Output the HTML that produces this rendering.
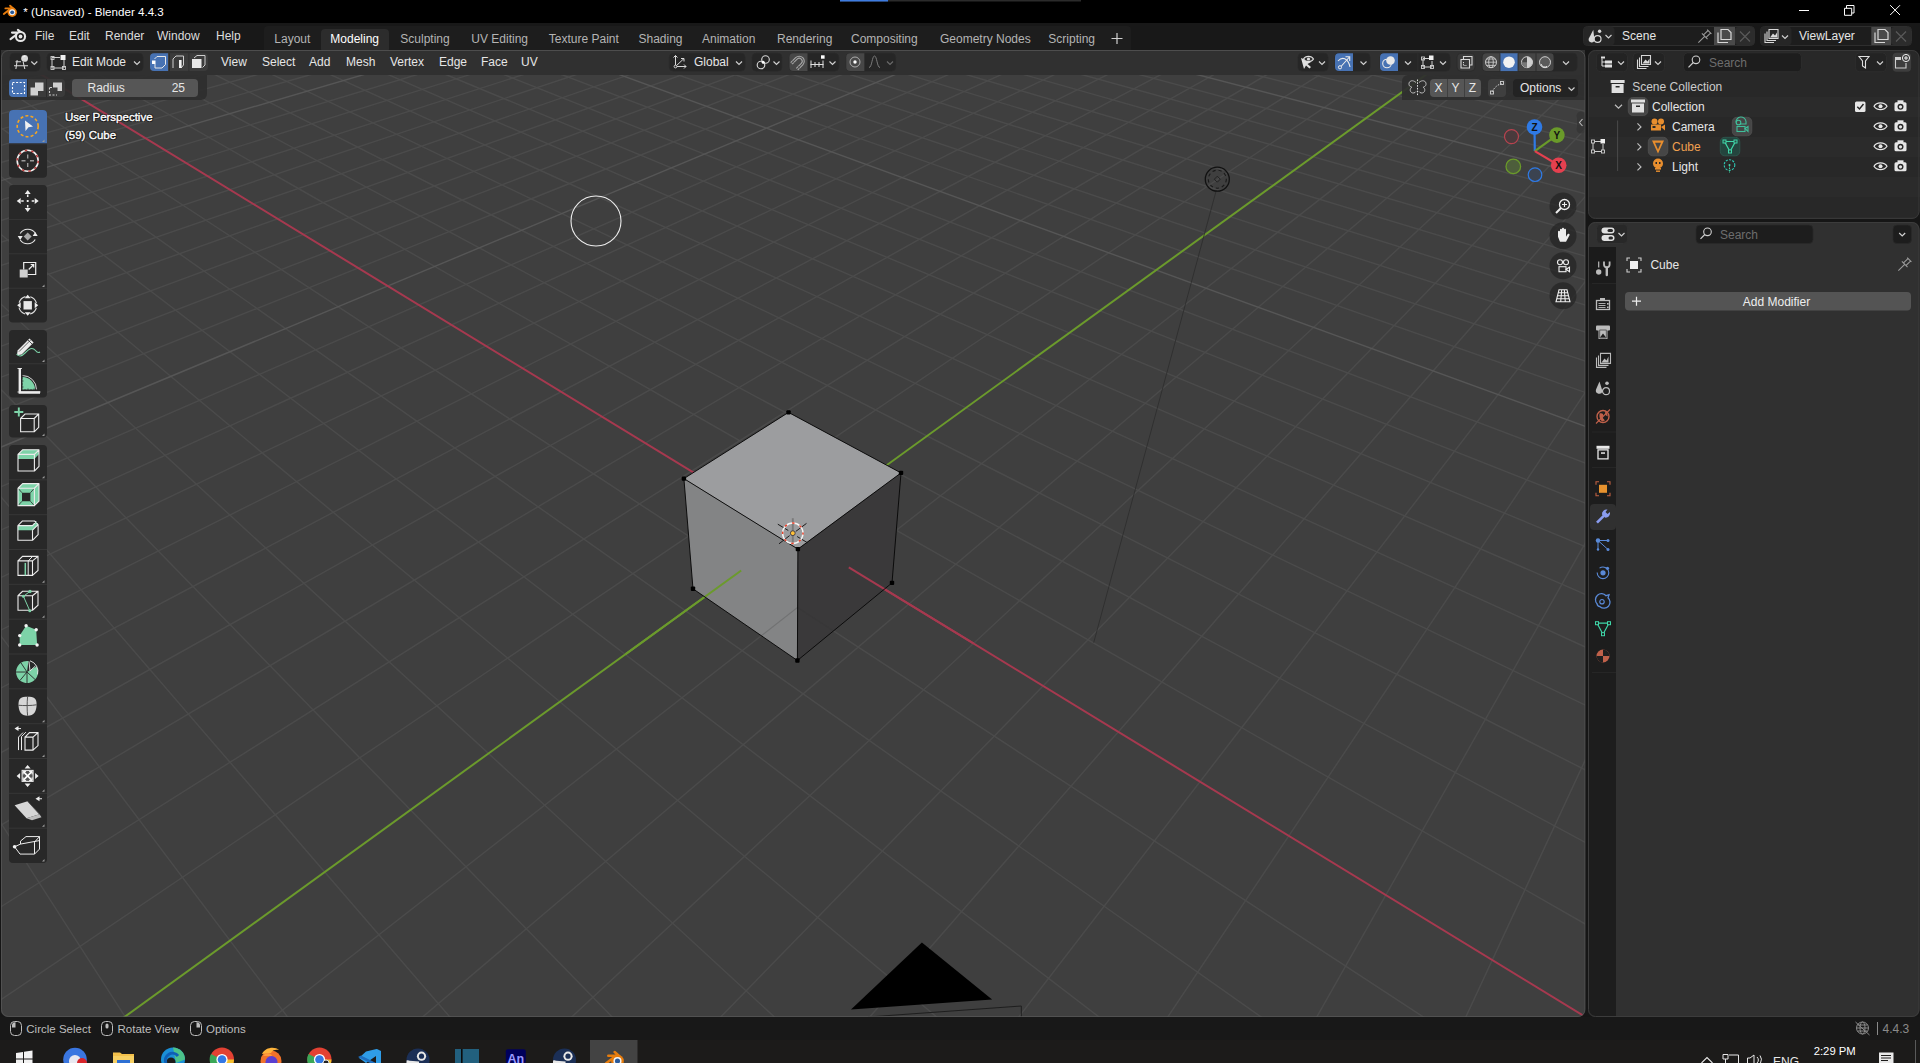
<!DOCTYPE html>
<html><head><meta charset="utf-8"><style>
body{margin:0;width:1920px;height:1063px;overflow:hidden;background:#161616}
svg{position:absolute;left:0;top:0;font-family:"Liberation Sans",sans-serif}
</style></head><body>
<svg width="1920" height="1063" viewBox="0 0 1920 1063">
<defs><clipPath id="vpc"><rect x="1" y="50" width="1584" height="967" rx="7"/></clipPath></defs>
<g clip-path="url(#vpc)">
<rect x="0" y="50" width="1586" height="968" fill="#3f3f3f"/>
<g stroke="#4b4b4b" stroke-width="1.4" fill="none"><path d="M-4614.4 685.4L744.5 -211.9"/><path d="M-4614.4 685.4L-13135150.8 3915475.6"/><path d="M-4768.6 731.3L757.2 -209.9"/><path d="M-4338.9 639.2L-12700414.3 3915632.5"/><path d="M-4935.8 781.2L770.1 -208.0"/><path d="M-4084.9 596.7L-12265677.7 3915789.3"/><path d="M-5117.8 835.4L783.3 -206.0"/><path d="M-3850.1 557.4L-11830941.2 3915946.2"/><path d="M-5316.6 894.7L796.6 -204.0"/><path d="M-3632.4 520.9L-11396204.7 3916103.0"/><path d="M-5774.9 1031.4L824.0 -199.9"/><path d="M-3241.1 455.4L-10526731.6 3916416.7"/><path d="M-6040.9 1110.7L838.0 -197.7"/><path d="M-3064.7 425.9L-10091995.1 3916573.6"/><path d="M-6337.1 1199.0L852.3 -195.6"/><path d="M-2899.5 398.2L-9657258.5 3916730.4"/><path d="M-6668.8 1297.9L866.8 -193.4"/><path d="M-2744.4 372.3L-9222522.0 3916887.3"/><path d="M-7043.0 1409.4L881.6 -191.1"/><path d="M-2598.6 347.9L-8787785.5 3917044.1"/><path d="M-7468.3 1536.2L896.6 -188.9"/><path d="M-2461.2 324.9L-8353048.9 3917201.0"/><path d="M-7955.9 1681.6L912.0 -186.5"/><path d="M-2331.6 303.2L-7918312.4 3917357.8"/><path d="M-8520.6 1850.0L927.6 -184.2"/><path d="M-2209.0 282.6L-7483575.9 3917514.7"/><path d="M-9182.2 2047.2L943.4 -181.8"/><path d="M-2093.0 263.2L-7048839.3 3917671.5"/><path d="M-10917.1 2564.5L976.1 -176.9"/><path d="M-1878.6 227.3L-6179366.3 3917985.2"/><path d="M-12085.5 2912.8L992.9 -174.3"/><path d="M-1779.3 210.7L-5744629.7 3918142.1"/><path d="M-13559.5 3352.3L1010.0 -171.7"/><path d="M-1684.8 194.9L-5309893.2 3918298.9"/><path d="M-15477.1 3924.0L1027.4 -169.1"/><path d="M-1594.7 179.8L-4875156.7 3918455.8"/><path d="M-18073.9 4698.2L1045.1 -166.4"/><path d="M-1508.8 165.4L-4440420.1 3918612.6"/><path d="M-21788.3 5805.7L1063.2 -163.7"/><path d="M-1426.7 151.7L-4005683.6 3918769.5"/><path d="M-27540.1 7520.5L1081.7 -160.9"/><path d="M-1348.3 138.5L-3570947.1 3918926.3"/><path d="M-37638.4 10531.3L1100.5 -158.0"/><path d="M-1273.2 126.0L-3136210.5 3919083.2"/><path d="M-60002.9 17199.1L1119.7 -155.1"/><path d="M-1201.3 113.9L-2701474.0 3919240.0"/><path d="M-12991167.2 3915527.6L1159.3 -149.1"/><path d="M-1066.1 91.3L-1832000.9 3919553.7"/><path d="M-12592190.1 3915671.5L1179.7 -146.1"/><path d="M-1002.6 80.6L-1397264.4 3919710.6"/><path d="M-12193213.0 3915815.5L1200.6 -142.9"/><path d="M-941.5 70.4L-962527.9 3919867.4"/><path d="M-11794236.0 3915959.4L1221.8 -139.7"/><path d="M-882.7 60.6L-527791.3 3920024.3"/><path d="M-11395258.9 3916103.4L1243.6 -136.4"/><path d="M-826.1 51.1L-93054.8 3920181.1"/><path d="M-10996281.8 3916247.3L1265.8 -133.1"/><path d="M-771.6 42.0L341681.7 3920338.0"/><path d="M-10597304.7 3916391.2L1288.4 -129.6"/><path d="M-719.1 33.2L776418.3 3920494.8"/><path d="M-10198327.7 3916535.2L1311.6 -126.1"/><path d="M-668.4 24.7L1211154.8 3920651.7"/><path d="M-9799350.6 3916679.1L1335.3 -122.5"/><path d="M-619.5 16.5L1645891.3 3920808.5"/><path d="M-9001396.5 3916967.0L1384.3 -115.1"/><path d="M-526.6 1.0L2515364.4 3921122.2"/><path d="M-8602419.4 3917111.0L1409.7 -111.3"/><path d="M-482.5 -6.4L2950100.9 3921279.1"/><path d="M-8203442.3 3917254.9L1435.6 -107.4"/><path d="M-439.8 -13.6L3384837.5 3921435.9"/><path d="M-7804465.2 3917398.9L1462.2 -103.4"/><path d="M-398.4 -20.5L3819574.0 3921592.8"/><path d="M-7405488.2 3917542.8L1489.4 -99.2"/><path d="M-358.4 -27.2L4254310.5 3921749.6"/><path d="M-7006511.1 3917686.8L1517.3 -95.0"/><path d="M-319.6 -33.7L4689047.1 3921906.5"/><path d="M-6607534.0 3917830.7L1545.8 -90.7"/><path d="M-281.9 -40.0L5123783.6 3922063.3"/><path d="M-6208557.0 3917974.7L1575.0 -86.3"/><path d="M-245.5 -46.1L5558520.1 3922220.2"/><path d="M-5809579.9 3918118.6L1605.0 -81.8"/><path d="M-210.0 -52.0L5993256.7 3922377.0"/><path d="M-5011625.7 3918406.5L1667.3 -72.3"/><path d="M-142.3 -63.4L6862729.7 3922690.7"/><path d="M-4612648.7 3918550.5L1699.6 -67.5"/><path d="M-109.8 -68.8L7297466.3 3922847.6"/><path d="M-4213671.6 3918694.4L1732.8 -62.4"/><path d="M-78.3 -74.1L7732202.8 3923004.4"/><path d="M-3814694.5 3918838.4L1766.9 -57.3"/><path d="M-47.6 -79.2L8166939.3 3923161.3"/><path d="M-3415717.5 3918982.3L1801.9 -52.0"/><path d="M-17.8 -84.2L8601675.9 3923318.1"/><path d="M-3016740.4 3919126.3L1837.9 -46.5"/><path d="M11.2 -89.1L9036412.4 3923475.0"/><path d="M-2617763.3 3919270.2L1874.9 -41.0"/><path d="M39.5 -93.8L9471148.9 3923631.8"/><path d="M-2218786.3 3919414.2L1912.9 -35.2"/><path d="M67.0 -98.4L9905885.5 3923788.7"/><path d="M-1819809.2 3919558.1L1952.1 -29.3"/><path d="M93.8 -102.9L10340622.0 3923945.5"/><path d="M-1021855.0 3919846.0L2033.8 -16.9"/><path d="M145.4 -111.6L11210095.1 3924259.2"/><path d="M-622878.0 3919990.0L2076.5 -10.5"/><path d="M170.3 -115.7L11644831.6 3924416.1"/><path d="M-223900.9 3920133.9L2120.5 -3.8"/><path d="M194.5 -119.8L12079568.1 3924572.9"/><path d="M175076.2 3920277.9L2165.8 3.0"/><path d="M218.1 -123.7L12514304.7 3924729.8"/><path d="M574053.2 3920421.8L2212.6 10.1"/><path d="M241.2 -127.6L93001.6 27989.7"/><path d="M973030.3 3920565.8L2260.8 17.4"/><path d="M263.7 -131.4L46167.9 13331.6"/><path d="M1372007.4 3920709.7L2310.7 24.9"/><path d="M285.7 -135.1L31194.3 8645.1"/><path d="M1770984.5 3920853.7L2362.2 32.7"/><path d="M307.2 -138.7L23821.5 6337.6"/><path d="M2169961.5 3920997.6L2415.4 40.8"/><path d="M328.2 -142.2L19433.7 4964.3"/><path d="M2967915.7 3921285.5L2527.3 57.7"/><path d="M368.9 -149.0L14451.6 3405.0"/><path d="M3366892.7 3921429.5L2586.2 66.6"/><path d="M388.5 -152.3L12901.8 2919.9"/><path d="M3765869.8 3921573.4L2647.2 75.8"/><path d="M407.7 -155.5L11698.7 2543.3"/><path d="M4164846.9 3921717.4L2710.5 85.4"/><path d="M426.5 -158.6L10737.6 2242.5"/><path d="M4563823.9 3921861.3L2776.1 95.3"/><path d="M444.8 -161.7L9952.3 1996.7"/><path d="M4962801.0 3922005.3L2844.2 105.6"/><path d="M462.8 -164.7L9298.5 1792.1"/><path d="M5361778.1 3922149.2L2915.0 116.3"/><path d="M480.5 -167.7L8745.8 1619.1"/><path d="M5760755.2 3922293.2L2988.5 127.4"/><path d="M497.7 -170.5L8272.3 1470.9"/><path d="M6159732.2 3922437.1L3065.0 139.0"/><path d="M514.6 -173.4L7862.2 1342.6"/><path d="M6957686.4 3922725.0L3227.6 163.6"/><path d="M547.4 -178.9L7187.4 1131.4"/><path d="M7356663.4 3922868.9L3314.2 176.7"/><path d="M563.3 -181.5L6906.3 1043.4"/><path d="M7755640.5 3923012.9L3404.5 190.3"/><path d="M578.9 -184.1L6655.0 964.7"/><path d="M8154617.6 3923156.8L3498.8 204.6"/><path d="M594.2 -186.7L6428.9 894.0"/><path d="M8553594.7 3923300.8L3597.5 219.5"/><path d="M609.2 -189.2L6224.3 829.9"/><path d="M8952571.7 3923444.7L3700.8 235.1"/><path d="M623.9 -191.7L6038.5 771.8"/><path d="M9351548.8 3923588.7L3809.1 251.5"/><path d="M638.3 -194.1L5868.8 718.7"/><path d="M9750525.9 3923732.6L3922.6 268.7"/><path d="M652.4 -196.5L5713.3 670.0"/><path d="M10149502.9 3923876.6L4041.9 286.7"/><path d="M666.3 -198.8L5570.2 625.2"/><path d="M10947457.1 3924164.5L4299.4 325.6"/><path d="M693.3 -203.3L5316.0 545.7"/><path d="M11346434.1 3924308.4L4438.7 346.7"/><path d="M706.5 -205.5L5202.6 510.1"/><path d="M11745411.2 3924452.4L4585.8 368.9"/><path d="M719.4 -207.7L5096.9 477.1"/><path d="M12144388.3 3924596.3L4741.4 392.5"/><path d="M732.1 -209.8L4998.4 446.2"/><path d="M12543365.4 3924740.3L4906.2 417.4"/><path d="M744.5 -211.9L4906.2 417.4"/></g>
<g stroke="#565656" stroke-width="1.4" fill="none"><path d="M-5534.6 959.7L810.2 -201.9"/><path d="M-3429.9 487.0L-10961468.1 3916259.9"/><path d="M-9968.2 2281.6L959.6 -179.3"/><path d="M-1983.0 244.8L-6614102.8 3917828.4"/><path d="M-151549.7 44493.2L1139.3 -152.2"/><path d="M-1132.3 102.4L-2266737.5 3919396.9"/><path d="M-9400373.5 3916823.1L1359.6 -118.9"/><path d="M-572.3 8.6L2080627.9 3920965.4"/><path d="M-1420832.1 3919702.1L1992.3 -23.2"/><path d="M119.9 -107.3L10775358.5 3924102.4"/><path d="M2568938.6 3921141.6L2470.4 49.1"/><path d="M348.8 -145.6L16523.3 4053.4"/><path d="M6558709.3 3922581.0L3144.7 151.0"/><path d="M531.2 -176.1L7503.6 1230.3"/><path d="M10548480.0 3924020.5L4167.3 305.7"/><path d="M679.9 -201.1L5438.2 583.9"/></g>
<path d="M-175.7 -57.8L740.4 501.2M848.8 567.4L6427993.2 3922533.9" stroke="#a6394f" stroke-width="2" fill="none"/>
<path d="M-5410602.8 3918262.6L741.2 570.5M840.7 498.5L1635.7 -77.1" stroke="#6b9a2c" stroke-width="2" fill="none"/>
<path d="M1216.3 190.2L1093.7 642.7" stroke="#2c2c2c" stroke-width="0.8" fill="none"/>
<circle cx="1217.3" cy="179.2" r="12" fill="none" stroke="#111" stroke-width="1.3"/>
<circle cx="1217.3" cy="179.2" r="9" fill="none" stroke="#1a1a1a" stroke-width="1.1" stroke-dasharray="3.2 3"/>
<path d="M1217.3 176.2l3 3l-3 3l-3 -3z" fill="none" stroke="#222" stroke-width="1"/>
<polygon points="788.5,412.4 901.0,472.9 797.9,549.1 683.9,478.6" fill="#9c9d9f"/>
<polygon points="683.9,478.6 797.9,549.1 797.4,660.5 693.0,588.8" fill="#838485"/>
<polygon points="797.9,549.1 901.0,472.9 892.0,582.9 797.4,660.5" fill="#3a393a"/>
<clipPath id="facec"><polygon points="683.9,478.6 797.9,549.1 797.4,660.5 693.0,588.8"/><polygon points="797.9,549.1 901.0,472.9 892.0,582.9 797.4,660.5"/></clipPath>
<path d="M507.7 658.1L688.6 536.1M616.4 749.1L797.6 607.4M583.9 539.0L803.2 693.8M797.6 607.4L994.3 736.1M896.3 530.3L1088.0 639.8M803.2 693.8L999.2 527.4" stroke="#333" stroke-width="1.2" fill="none" opacity="0.22" clip-path="url(#facec)"/>
<path d="M625.3 654.4L741.2 570.5" stroke="#6b9a2c" stroke-width="2" fill="none"/>
<path d="M848.8 567.4L973.5 643.4" stroke="#a6394f" stroke-width="2" fill="none"/>
<path d="M788.5 412.4L901.0 472.9M901.0 472.9L797.9 549.1M797.9 549.1L683.9 478.6M683.9 478.6L788.5 412.4M683.9 478.6L693.0 588.8M797.9 549.1L797.4 660.5M901.0 472.9L892.0 582.9M693.0 588.8L797.4 660.5M797.4 660.5L892.0 582.9" stroke="#080808" stroke-width="0.95" fill="none"/>
<rect x="786.3" y="410.2" width="4.4" height="4.4" rx="1" fill="#000"/>
<rect x="898.8" y="470.7" width="4.4" height="4.4" rx="1" fill="#000"/>
<rect x="795.7" y="546.9" width="4.4" height="4.4" rx="1" fill="#000"/>
<rect x="681.7" y="476.4" width="4.4" height="4.4" rx="1" fill="#000"/>
<rect x="690.8" y="586.6" width="4.4" height="4.4" rx="1" fill="#000"/>
<rect x="795.2" y="658.3" width="4.4" height="4.4" rx="1" fill="#000"/>
<rect x="889.8" y="580.7" width="4.4" height="4.4" rx="1" fill="#000"/>
<g transform="translate(792.8,533.2)"><path d="M0 -15V10" stroke="#7a7a7a" stroke-width="1.9"/><path d="M-15 -9L-4.5 -2.7M4.3 3.3L14.6 9.5M13.7 -9.8L3 -1.8M-3.2 2.4L-13.8 10.6" stroke="#1a1a1a" stroke-width="1"/><circle r="10.2" fill="none" stroke="#f4f4f4" stroke-width="1.5"/><circle r="10.2" fill="none" stroke="#e8402a" stroke-width="1.5" stroke-dasharray="2.5 5.5" stroke-dashoffset="1"/><circle r="2.4" fill="#ffc23a" stroke="#2a2a40" stroke-width="0.8"/></g>
<polygon points="921.9,942.5 851,1009.5 992.1,999.5" fill="#000"/>
<path d="M868 1017L1021.3 1006V1017" stroke="#1e1e1e" stroke-width="1" fill="none"/>
<circle cx="596" cy="221" r="25" fill="none" stroke="#fff" stroke-width="1.1" opacity="0.9"/>
</g>
<rect x="0" y="0" width="1920" height="23" fill="#000"/>
<rect x="840" y="0" width="241" height="1.5" fill="#2b2b2b"/>
<rect x="840" y="0" width="48" height="1.5" fill="#3d7be0"/>
<g transform="translate(12.2,12.3) scale(1.0)"><g stroke="#e87d0d" stroke-linecap="round" stroke-width="1.9" fill="none"><path d="M-6.8 -3.9H-1.3M-2.1 -6.6L1.4 -3.6M-8.4 1.7L-3.3 -2.3"/></g><circle r="4.7" fill="#e87d0d"/><circle r="3" fill="#f4f4f4"/><circle r="1.9" fill="#2a5a9a"/></g>
<text x="23.3" y="16" font-size="11.6" fill="#ffffff">* (Unsaved) - Blender 4.4.3</text>
<path d="M1799 10.5H1809" fill="none" stroke="#fff" stroke-width="1"/>
<path d="M1844.5 8.3H1851.7V15.3H1844.5Z M1846.5 8.3V5.5H1854V13H1851.7" fill="none" stroke="#fff" stroke-width="1"/>
<path d="M1890.2 5.2L1900 15M1900 5.2L1890.2 15" fill="none" stroke="#fff" stroke-width="1"/>
<rect x="0" y="23" width="1920" height="27" fill="#181818"/>
<g transform="translate(20.5,36.5)"><g stroke="#e6e6e6" stroke-linecap="round" stroke-width="2.1" fill="none"><path d="M-8.5 -3.9H-2M-2.6 -6.6L1.8 -3.4M-10 2.7L-4 -1.8"/></g><circle r="5.6" fill="#e6e6e6"/><circle r="3.5" fill="#181818"/><circle r="1.9" fill="#e6e6e6"/></g>
<text x="35" y="40.3" font-size="12" fill="#dcdcdc">File</text>
<text x="69" y="40.3" font-size="12" fill="#dcdcdc">Edit</text>
<text x="105" y="40.3" font-size="12" fill="#dcdcdc">Render</text>
<text x="157" y="40.3" font-size="12" fill="#dcdcdc">Window</text>
<text x="216" y="40.3" font-size="12" fill="#dcdcdc">Help</text>
<rect x="264" y="26" width="867" height="24" fill="#1d1d1d" rx="4"/>
<rect x="264" y="40" width="867" height="10" fill="#1d1d1d"/>
<rect x="321" y="29" width="68" height="24" fill="#2c2c2c" rx="4"/>
<text x="274.3" y="43.2" font-size="12" fill="#b4b4b4">Layout</text>
<text x="330.3" y="43.2" font-size="12" fill="#ffffff">Modeling</text>
<text x="400.3" y="43.2" font-size="12" fill="#b4b4b4">Sculpting</text>
<text x="471.3" y="43.2" font-size="12" fill="#b4b4b4">UV Editing</text>
<text x="548.8" y="43.2" font-size="12" fill="#b4b4b4">Texture Paint</text>
<text x="638.5" y="43.2" font-size="12" fill="#b4b4b4">Shading</text>
<text x="702" y="43.2" font-size="12" fill="#b4b4b4">Animation</text>
<text x="777" y="43.2" font-size="12" fill="#b4b4b4">Rendering</text>
<text x="851" y="43.2" font-size="12" fill="#b4b4b4">Compositing</text>
<text x="940" y="43.2" font-size="12" fill="#b4b4b4">Geometry Nodes</text>
<text x="1048.3" y="43.2" font-size="12" fill="#b4b4b4">Scripting</text>
<path d="M1111.5 38.5H1122.5M1117 33V44" fill="none" stroke="#cfcfcf" stroke-width="1.2"/>
<rect x="1583.5" y="26.5" width="171" height="19" fill="#1d1d1d" rx="4" stroke="#2e2e2e" stroke-width="1"/>
<rect x="1583.5" y="26.5" width="31" height="19" fill="#262626" rx="4"/>
<rect x="1714" y="27" width="21" height="18" fill="#4a4a4a"/>
<rect x="1735" y="27" width="19.5" height="18" fill="#2c2c2c" rx="3"/>
<text x="1622.1" y="40.4" font-size="12" fill="#e6e6e6">Scene</text>
<path d="M1593.3 29.8L1588.7 38.8A3.1 3.1 0 0 0 1594.5 40.8Z" fill="#d8d8d8"/>
<circle cx="1599.6" cy="31.2" r="1.7" fill="#d8d8d8"/><circle cx="1597.6" cy="39" r="3.4" fill="#1d1d1d" stroke="#d8d8d8" stroke-width="1.2"/>
<path d="M1605.5 35.0L1608.5 38.0L1611.5 35.0" fill="none" stroke="#cfcfcf" stroke-width="1.2"/>
<g transform="translate(1704,37) rotate(45)" stroke="#9a9a9a" stroke-width="1.1" fill="none"><path d="M-1.8 -7V-1.5M1.8 -7V-1.5M-3 -7.5H3M-4 -1H4M0 -1V8"/></g>
<path d="M1718 32.5V42.5H1728M1721 29.5H1728L1731 32.5V39.5H1721Z" fill="none" stroke="#d8d8d8" stroke-width="1.2"/>
<path d="M1740 31.5L1750 41.5M1750 31.5L1740 41.5" fill="none" stroke="#5a5a5a" stroke-width="1.2"/>
<rect x="1760.5" y="26.5" width="151" height="19" fill="#1d1d1d" rx="4" stroke="#2e2e2e" stroke-width="1"/>
<rect x="1760.5" y="26.5" width="31" height="19" fill="#262626" rx="4"/>
<rect x="1871.3" y="27" width="19.7" height="18" fill="#4a4a4a"/>
<rect x="1891" y="27" width="20" height="18" fill="#2c2c2c" rx="3"/>
<text x="1799" y="40.4" font-size="12" fill="#e6e6e6">ViewLayer</text>
<path d="M1765 33.5V42.5H1774 M1767 31.5V40.5H1776 M1769 29.5H1778V38.5H1769Z" fill="none" stroke="#d8d8d8" stroke-width="1.1"/>
<path d="M1770 37.5L1773 33.5L1775 35.5L1777 32.5V37.5Z" fill="#d8d8d8"/>
<path d="M1782 35.5L1785 38.5L1788 35.5" fill="none" stroke="#cfcfcf" stroke-width="1.2"/>
<path d="M1875 32.5V42.5H1885M1878 29.5H1885L1888 32.5V39.5H1878Z" fill="none" stroke="#d8d8d8" stroke-width="1.2"/>
<path d="M1896 31.5L1906 41.5M1906 31.5L1896 41.5" fill="none" stroke="#5a5a5a" stroke-width="1.2"/>
<rect x="1" y="50" width="1584" height="25" fill="#303030"/>
<rect x="10" y="53.3" width="30" height="17.8" fill="#262626" rx="4" stroke="#2a2a2a" stroke-width="0.8"/>
<path d="M14 65.8H28M15.5 61.8H21M17.2 60.2L15.9 69M23.2 62L24.8 69" fill="none" stroke="#d8d8d8" stroke-width="1.1"/>
<circle cx="24.6" cy="58.4" r="3.4" fill="#d8d8d8"/><path d="M23 57.5A2 2 0 0 1 25.5 56.2" stroke="#fff" stroke-width="0.8" fill="none"/>
<path d="M31.299999999999997 61.5L34.3 64.5L37.3 61.5" fill="none" stroke="#cfcfcf" stroke-width="1.2"/>
<rect x="47" y="53.3" width="96" height="17.8" fill="#262626" rx="4" stroke="#2a2a2a" stroke-width="0.8"/>
<path d="M52 57.5H60M52 57.5V68M52 68H64M64 68V60M52 57.5" fill="none" stroke="#cfcfcf" stroke-width="1"/>
<rect x="51" y="56.5" width="3" height="3" fill="none" stroke="#cfcfcf" stroke-width="0.9"/><rect x="51" y="66.5" width="3" height="3" fill="none" stroke="#cfcfcf" stroke-width="0.9"/><rect x="62.5" y="66.5" width="3" height="3" fill="none" stroke="#cfcfcf" stroke-width="0.9"/><rect x="60.5" y="55" width="5" height="5" fill="#f0f0f0"/>
<text x="72" y="65.9" font-size="12" fill="#e6e6e6">Edit Mode</text>
<path d="M134 61.5L137 64.5L140 61.5" fill="none" stroke="#cfcfcf" stroke-width="1.2"/>
<rect x="150" y="53.3" width="58" height="17.8" fill="#3b3b3b" rx="4"/>
<path d="M154 53.3H168V71.1H154A4 4 0 0 1 150 67.1V57.3A4 4 0 0 1 154 53.3Z" fill="#4772b3"/>
<rect x="169" y="53.3" width="0.8" height="17.8" fill="#2a2a2a"/>
<rect x="188.5" y="53.3" width="0.8" height="17.8" fill="#2a2a2a"/>
<path d="M155 64V68H162L165.5 64.5V56.5H157L154.5 59" fill="none" stroke="#e8e8e8" stroke-width="1"/>
<rect x="152" y="60.5" width="3.5" height="3.5" fill="#fff"/>
<path d="M173 68V59L176 56H183.5V65L181 68" fill="none" stroke="#cfcfcf" stroke-width="1"/>
<rect x="179" y="60" width="2.6" height="8" fill="#f0f0f0"/>
<path d="M194 58L197 55.5H205V65L202.5 67.5" fill="none" stroke="#cfcfcf" stroke-width="1"/>
<rect x="192" y="59" width="9.5" height="9" fill="#e8e8e8"/>
<text x="221" y="65.9" font-size="12" fill="#e6e6e6">View</text>
<text x="262" y="65.9" font-size="12" fill="#e6e6e6">Select</text>
<text x="309" y="65.9" font-size="12" fill="#e6e6e6">Add</text>
<text x="346" y="65.9" font-size="12" fill="#e6e6e6">Mesh</text>
<text x="390" y="65.9" font-size="12" fill="#e6e6e6">Vertex</text>
<text x="439" y="65.9" font-size="12" fill="#e6e6e6">Edge</text>
<text x="481" y="65.9" font-size="12" fill="#e6e6e6">Face</text>
<text x="521" y="65.9" font-size="12" fill="#e6e6e6">UV</text>
<rect x="669.4" y="53.3" width="75.6" height="17.8" fill="#262626" rx="4" stroke="#2a2a2a" stroke-width="0.8"/>
<path d="M675.5 55.5V66.5H686M675.5 66.5L684 58.5M673.5 57.5L675.5 55.5L677.5 57.5M684 64.5L686 66.5L684 68.5M681 58.5H684V61.5" fill="none" stroke="#d8d8d8" stroke-width="1"/>
<circle cx="675.5" cy="66.5" r="1.4" fill="#303030" stroke="#d8d8d8" stroke-width="0.9"/>
<text x="694" y="65.9" font-size="12" fill="#e6e6e6">Global</text>
<path d="M736 61.5L739 64.5L742 61.5" fill="none" stroke="#cfcfcf" stroke-width="1.2"/>
<rect x="752.2" y="53.3" width="29.7" height="17.8" fill="#262626" rx="4" stroke="#2a2a2a" stroke-width="0.8"/>
<circle cx="761" cy="65" r="3.8" fill="none" stroke="#d8d8d8" stroke-width="1.1"/><circle cx="765.5" cy="59.5" r="3.8" fill="none" stroke="#d8d8d8" stroke-width="1.1"/><circle cx="763.2" cy="62.2" r="1.5" fill="#fff"/>
<path d="M773.5 61.5L776.5 64.5L779.5 61.5" fill="none" stroke="#cfcfcf" stroke-width="1.2"/>
<rect x="789.4" y="53.3" width="49.3" height="17.8" fill="#262626" rx="4" stroke="#2a2a2a" stroke-width="0.8"/>
<path d="M793.4 53.3H807.5V71.1H793.4A4 4 0 0 1 789.4 67.1V57.3A4 4 0 0 1 793.4 53.3Z" fill="#474747"/>
<g transform="translate(798.5,62) rotate(45)"><path d="M-4 6V-1A4 4 0 0 1 4 -1V6" stroke="#a8a8a8" stroke-width="3.2" fill="none"/><path d="M-4 6V-1A4 4 0 0 1 4 -1V6" stroke="#474747" stroke-width="1" fill="none"/><path d="M-5.6 3.5H-2.4M2.4 3.5H5.6" stroke="#474747" stroke-width="0.8"/></g>
<path d="M810.5 64.5H823.5M811 60.5V68M815 62V67M819 62V67M823 60.5V68" fill="none" stroke="#e0e0e0" stroke-width="1"/>
<rect x="821" y="55.3" width="3.6" height="3.4" fill="#fff"/>
<path d="M829.5 61.5L832.5 64.5L835.5 61.5" fill="none" stroke="#cfcfcf" stroke-width="1.2"/>
<rect x="846.2" y="53.3" width="49.4" height="17.8" fill="#262626" rx="4" stroke="#2a2a2a" stroke-width="0.8"/>
<path d="M850.2 53.3H864.4V71.1H850.2A4 4 0 0 1 846.2 67.1V57.3A4 4 0 0 1 850.2 53.3Z" fill="#474747"/>
<circle cx="855" cy="62" r="5" fill="none" stroke="#b8b8b8" stroke-width="0.9"/><circle cx="855" cy="62" r="1.7" fill="#fff"/>
<path d="M869 67.5C872 67.5 872 56 874.5 56C877 56 877 67.5 880 67.5" fill="none" stroke="#7a7a7a" stroke-width="1"/>
<path d="M887 61.5L890 64.5L893 61.5" fill="none" stroke="#6a6a6a" stroke-width="1.2"/>
<rect x="1298" y="53.3" width="30" height="17.8" fill="#262626" rx="4" stroke="#2a2a2a" stroke-width="0.8"/>
<path d="M1301 58L1304 69L1306 65.5L1309.5 68.5L1311 67L1307.5 64L1311 62Z" fill="#e0e0e0"/>
<path d="M1303.5 59C1305.5 55.5 1311.5 55.5 1313.5 59C1311.5 62.5 1305.5 62.5 1303.5 59Z" fill="#303030" stroke="#e0e0e0" stroke-width="1.1"/><circle cx="1308.5" cy="59" r="1.6" fill="#e0e0e0"/>
<path d="M1319 61.5L1322 64.5L1325 61.5" fill="none" stroke="#cfcfcf" stroke-width="1.2"/>
<rect x="1335" y="53.3" width="35" height="17.8" fill="#262626" rx="4" stroke="#2a2a2a" stroke-width="0.8"/>
<path d="M1339 53.3H1353V71.1H1339A4 4 0 0 1 1335 67.1V57.3A4 4 0 0 1 1339 53.3Z" fill="#4772b3"/>
<path d="M1338 61C1342 56.5 1348 57.5 1350 67" fill="none" stroke="#ececec" stroke-width="1.1"/>
<path d="M1341 66.5L1349 57.5M1345.5 56.8H1349.7V61" fill="none" stroke="#ececec" stroke-width="1.1"/>
<circle cx="1340" cy="67.3" r="1.6" fill="#4772b3" stroke="#ececec" stroke-width="1"/>
<path d="M1360.5 61.5L1363.5 64.5L1366.5 61.5" fill="none" stroke="#cfcfcf" stroke-width="1.2"/>
<rect x="1380" y="53.3" width="70" height="17.8" fill="#262626" rx="4" stroke="#2a2a2a" stroke-width="0.8"/>
<path d="M1384 53.3H1398V71.1H1384A4 4 0 0 1 1380 67.1V57.3A4 4 0 0 1 1384 53.3Z" fill="#4772b3"/>
<circle cx="1387" cy="63.5" r="4.3" fill="none" stroke="#e8e8e8" stroke-width="1.1"/><circle cx="1390.5" cy="60.5" r="4.3" fill="#e8e8e8"/>
<path d="M1405 61.5L1408 64.5L1411 61.5" fill="none" stroke="#cfcfcf" stroke-width="1.2"/>
<rect x="1417.5" y="53.3" width="0.8" height="17.8" fill="#2f2f2f"/>
<path d="M1423 58.5H1430M1423 58.5V67M1423 67H1432M1432 67V61" fill="none" stroke="#cfcfcf" stroke-width="1"/>
<rect x="1421.5" y="57" width="3" height="3" fill="none" stroke="#cfcfcf" stroke-width="0.9"/><rect x="1421.5" y="65.5" width="3" height="3" fill="none" stroke="#cfcfcf" stroke-width="0.9"/><rect x="1430.5" y="65.5" width="3" height="3" fill="none" stroke="#cfcfcf" stroke-width="0.9"/><rect x="1429" y="55.5" width="4.5" height="4.5" fill="#f0f0f0"/>
<path d="M1440 61.5L1443 64.5L1446 61.5" fill="none" stroke="#cfcfcf" stroke-width="1.2"/>
<rect x="1457" y="53.3" width="18" height="17.8" fill="#3a3a3a" rx="4" stroke="#2a2a2a" stroke-width="0.8"/>
<path d="M1461 59.5H1469.5V68H1461Z M1463.5 59.5V56.5H1472V65H1469.5" fill="none" stroke="#d8d8d8" stroke-width="1.1"/><path d="M1463.5 62V65.5H1467" stroke="#d8d8d8" stroke-width="1" fill="none" stroke-dasharray="1.2 1"/>
<rect x="1482" y="53.3" width="95" height="17.8" fill="#262626" rx="4" stroke="#2a2a2a" stroke-width="0.8"/>
<rect x="1482.5" y="53.3" width="71.5" height="17.8" fill="#454545" rx="4"/>
<rect x="1500" y="53.3" width="18" height="17.8" fill="#4772b3"/>
<rect x="1499.6" y="53.3" width="0.8" height="17.8" fill="#2a2a2a"/>
<rect x="1517.6" y="53.3" width="0.8" height="17.8" fill="#2a2a2a"/>
<rect x="1535.6" y="53.3" width="0.8" height="17.8" fill="#2a2a2a"/>
<rect x="1553.6" y="53.3" width="0.8" height="17.8" fill="#2a2a2a"/>
<circle cx="1491" cy="62.2" r="5.5" fill="none" stroke="#cfcfcf" stroke-width="1"/><ellipse cx="1491" cy="62.2" rx="2.3" ry="5.5" fill="none" stroke="#cfcfcf" stroke-width="0.9"/><path d="M1485.5 62.2H1496.5M1486.5 59H1495.5M1486.5 65.4H1495.5" stroke="#cfcfcf" stroke-width="0.8"/>
<circle cx="1509" cy="62.2" r="5.8" fill="#f2f2f2"/>
<circle cx="1527" cy="62.2" r="5.5" fill="none" stroke="#cfcfcf" stroke-width="1"/><path d="M1527 56.7A5.5 5.5 0 0 1 1527 67.7Z" fill="#cfcfcf"/><path d="M1527 62.2L1521.5 62.2A5.5 5.5 0 0 0 1527 67.7Z" fill="#777"/>
<circle cx="1545" cy="62.2" r="5.5" fill="#5a5a5a" stroke="#cfcfcf" stroke-width="1"/><path d="M1541 64A4 4 0 0 0 1547 66.5" stroke="#eee" stroke-width="1" fill="none"/>
<path d="M1563 61.5L1566 64.5L1569 61.5" fill="none" stroke="#cfcfcf" stroke-width="1.2"/>
<path d="M1 75H207V94A6 6 0 0 1 201 100H1Z" fill="#2e2e2e" fill-opacity="0.93"/>
<rect x="9" y="79" width="56" height="18" fill="#3b3b3b" rx="4"/>
<path d="M13 79H27V97H13A4 4 0 0 1 9 93V83A4 4 0 0 1 13 79Z" fill="#4772b3"/>
<rect x="27" y="79" width="0.8" height="18" fill="#2a2a2a"/>
<rect x="46" y="79" width="0.8" height="18" fill="#2a2a2a"/>
<rect x="12.5" y="82.5" width="12" height="11" fill="none" stroke="#fff" stroke-width="1.1" stroke-dasharray="2 1.6"/>
<path d="M30.5 87.5H35V82.5H43.5V91H38V95.5H30.5Z" fill="#d0d0d0"/>
<path d="M49.5 87.5V95H57M52 87.5H49.5" fill="none" stroke="#d0d0d0" stroke-width="1.1" stroke-dasharray="2 1.5"/>
<path d="M53 82.5H62V91H53Z" fill="#d0d0d0"/>
<path d="M53 87.5H57.5V91H53Z" fill="#3b3b3b"/>
<rect x="72" y="79" width="126" height="18" fill="#565656" rx="4"/>
<text x="87.5" y="92.2" font-size="12" fill="#e6e6e6">Radius</text>
<text x="185" y="92.2" font-size="12" fill="#e6e6e6" text-anchor="end">25</text>
<path d="M1408 75H1585V100H1402V81A6 6 0 0 1 1408 75Z" fill="#2e2e2e" fill-opacity="0.93"/>
<path d="M1416 82.5C1413 79.5 1408.5 80.5 1409 84.5C1409.3 86.5 1411 87 1412 87.3C1410 88 1409.5 91 1411.5 92.5C1413 93.5 1415 93 1416 91.5 M1419 82.5C1422 79.5 1426.5 80.5 1426 84.5C1425.7 86.5 1424 87 1423 87.3C1425 88 1425.5 91 1423.5 92.5C1422 93.5 1420 93 1419 91.5" fill="none" stroke="#bdbdbd" stroke-width="1"/>
<path d="M1417.5 79.5V95.5" fill="none" stroke="#e0e0e0" stroke-width="1" stroke-dasharray="1.6 1.2"/>
<rect x="1430" y="79" width="51" height="18" fill="#565656" rx="4"/>
<rect x="1447" y="79" width="0.8" height="18" fill="#3a3a3a"/>
<rect x="1464" y="79" width="0.8" height="18" fill="#3a3a3a"/>
<text x="1438.5" y="92.2" font-size="12" fill="#e6e6e6" text-anchor="middle">X</text>
<text x="1455.5" y="92.2" font-size="12" fill="#e6e6e6" text-anchor="middle">Y</text>
<text x="1472.5" y="92.2" font-size="12" fill="#e6e6e6" text-anchor="middle">Z</text>
<rect x="1488" y="79" width="18" height="18" fill="#3f3f3f" rx="4"/>
<path d="M1492 92C1494 88 1497 85 1501.5 83.5" fill="none" stroke="#d0d0d0" stroke-width="1" stroke-dasharray="1.6 1.4"/>
<rect x="1490.5" y="91" width="3" height="3" fill="none" stroke="#d0d0d0" stroke-width="0.9"/>
<rect x="1500.5" y="81.5" width="3" height="3" fill="none" stroke="#d0d0d0" stroke-width="0.9"/>
<rect x="1513" y="79" width="65" height="18" fill="#232323" rx="4"/>
<text x="1520" y="92.2" font-size="12" fill="#e6e6e6">Options</text>
<path d="M1568.5 87.5L1571.5 90.5L1574.5 87.5" fill="none" stroke="#cfcfcf" stroke-width="1.2"/>
<rect x="9" y="110" width="38" height="67.80000000000001" fill="#282828" rx="4"/>
<rect x="9" y="143.4" width="38" height="1" fill="#363636"/>
<path d="M13 110H43A4 4 0 0 1 47 114V143.2H9V114A4 4 0 0 1 13 110Z" fill="#4772b3"/>
<path d="M44.5 139.5V142H42Z" fill="#9a9a9a"/>
<circle cx="27.7" cy="126.3" r="10.5" fill="none" stroke="#f5a623" stroke-width="1.6" stroke-dasharray="3 2.2"/>
<path d="M25 120.5L33 126.5L28.5 127.2L25.5 131Z" fill="#f0f0f0"/>
<circle cx="27.7" cy="160.8" r="10.5" fill="none" stroke="#f0f0f0" stroke-width="1.6"/><circle cx="27.7" cy="160.8" r="10.5" fill="none" stroke="#b83a3a" stroke-width="1.6" stroke-dasharray="2.5 4.1"/>
<path d="M27.7 154.5V158.5M27.7 163V167M21.5 160.8H25.5M30 160.8H34" fill="none" stroke="#9a9a9a" stroke-width="1.4"/>
<rect x="9" y="185" width="38" height="137.60000000000002" fill="#282828" rx="4"/>
<rect x="9" y="218.9" width="38" height="1" fill="#363636"/>
<rect x="9" y="253.3" width="38" height="1" fill="#363636"/>
<rect x="9" y="287.70000000000005" width="38" height="1" fill="#363636"/>
<path d="M44.5 284.5V287H42Z" fill="#9a9a9a"/>
<g transform="translate(27.7,201)" fill="#eee"><path d="M0 -11L-3 -7H3Z M0 11L-3 7H3Z M-11 0L-7 -3V3Z M11 0L7 -3V3Z"/><path d="M0 -6.5V-4M0 4V6.5M-6.5 0H-4M4 0H6.5M0 -1V1M-1 0H1" stroke="#eee" stroke-width="1.5"/></g>
<g transform="translate(27.7,236.5)"><path d="M-7.5 -3A9 9 0 0 1 7.5 -3.5M7.5 3A9 9 0 0 1 -7.5 3.5" stroke="#e6e6e6" stroke-width="1.1" fill="none"/><path d="M-10 -0.5H-5L-7.5 3.5Z M10 -0.5H5L7.5 -4.5Z" fill="#eee"/><path d="M0 -4L4 0L0 4L-4 0Z" fill="#a8a8a8"/></g>
<g transform="translate(27.7,270.5)"><rect x="-8" y="-1" width="8" height="8" fill="#cfcfcf"/><path d="M-4 -1V-8H8V4H0" stroke="#eee" stroke-width="1.2" fill="none"/><path d="M1 -1L6 -6M3 -6H6V-3" stroke="#eee" stroke-width="1.2" fill="none"/></g>
<g transform="translate(27.7,305.3)"><circle r="9" fill="none" stroke="#ddd" stroke-width="1.1" stroke-dasharray="9.1 5"  stroke-dashoffset="11.6"/><rect x="-4.2" y="-4.2" width="8.4" height="8.4" fill="#e8e8e8"/><path d="M0 -10.5L-3 -7H3Z M0 10.5L-3 7H3Z M-10.5 0L-7 -3V3Z M10.5 0L7 -3V3Z" fill="#eee"/></g>
<rect x="9" y="330" width="38" height="67.5" fill="#282828" rx="4"/>
<rect x="9" y="363.25" width="38" height="1" fill="#363636"/>
<path d="M44.5 359.5V362H42Z" fill="#9a9a9a"/>
<path d="M17.6 350.5L29.5 338.5L33.6 342.6L21.6 354.6L17 355.3Z" fill="#ececec"/><path d="M19 351.6L30.8 339.8" stroke="#282828" stroke-width="0.7"/><path d="M28 340L32.2 344.2" stroke="#282828" stroke-width="0.8"/>
<path d="M16.5 354C19 357 21.5 356.5 25 353C29 349 32 346.5 35.5 350.5C37 352.5 38.5 353 40 352" stroke="#7dd3a8" stroke-width="1.1" fill="none"/>
<path d="M22.5 389.5V377A12.5 12.5 0 0 1 35 389.5Z" fill="#7dd3a8"/><path d="M22.5 375.5A14 14 0 0 1 36.5 389.5" stroke="#ececec" stroke-width="0.9" fill="none"/>
<path d="M19.8 368V392.5H40" stroke="#ececec" stroke-width="2.4" fill="none"/><path d="M17.5 368.5H22M17.5 392H40.5" stroke="#ececec" stroke-width="0.9"/>
<path d="M21 372H23M21 375H23.5M21 378H23M21 381H23.5M21 384H23M21 387H23.5M25 391V389M28 391V388.5M31 391V389M34 391V388.5M37 391V389" stroke="#282828" stroke-width="0.7"/>
<rect x="9" y="405" width="38" height="32.5" fill="#282828" rx="4"/>
<path d="M44.5 433.5V436H42Z" fill="#9a9a9a"/>
<path d="M18.8 407.5V416.5M14.3 412H23.3" stroke="#7dd3a8" stroke-width="1.9"/>
<path d="M20.6 418.5H34.2V431.8H20.6Z M20.6 418.5L25 414H38.7V427.3L34.2 431.8 M34.2 418.5L38.7 414" stroke="#ececec" stroke-width="1.1" fill="none"/>
<rect x="9" y="445" width="38" height="418" fill="#282828" rx="4"/>
<rect x="9" y="479.3333333333333" width="38" height="1" fill="#363636"/>
<rect x="9" y="514.1666666666666" width="38" height="1" fill="#363636"/>
<rect x="9" y="549.0" width="38" height="1" fill="#363636"/>
<rect x="9" y="583.8333333333334" width="38" height="1" fill="#363636"/>
<rect x="9" y="618.6666666666667" width="38" height="1" fill="#363636"/>
<rect x="9" y="653.5" width="38" height="1" fill="#363636"/>
<rect x="9" y="688.3333333333334" width="38" height="1" fill="#363636"/>
<rect x="9" y="723.1666666666667" width="38" height="1" fill="#363636"/>
<rect x="9" y="758.0" width="38" height="1" fill="#363636"/>
<rect x="9" y="792.8333333333334" width="38" height="1" fill="#363636"/>
<rect x="9" y="827.6666666666667" width="38" height="1" fill="#363636"/>
<path d="M44.5 475.8333333333333V478.3333333333333H42Z" fill="#9a9a9a"/>
<path d="M44.5 580.3333333333334V582.8333333333334H42Z" fill="#9a9a9a"/>
<path d="M44.5 615.1666666666667V617.6666666666667H42Z" fill="#9a9a9a"/>
<path d="M44.5 719.6666666666667V722.1666666666667H42Z" fill="#9a9a9a"/>
<path d="M44.5 754.5V757.0H42Z" fill="#9a9a9a"/>
<path d="M44.5 789.3333333333334V791.8333333333334H42Z" fill="#9a9a9a"/>
<path d="M44.5 824.1666666666667V826.6666666666667H42Z" fill="#9a9a9a"/>
<path d="M44.5 859.0V861.5H42Z" fill="#9a9a9a"/>
<g><path d="M18 454.4166666666667L22.6 449.81666666666666H39V454.0166666666667L34.4 459.0166666666667H18Z" fill="#7dd3a8"/><path d="M18 454.4166666666667H34.4V471.0166666666667H18Z M18 454.4166666666667L22.6 449.81666666666666H39.0V466.4166666666667L34.4 471.0166666666667 M34.4 454.4166666666667L39.0 449.81666666666666" stroke="#ececec" stroke-width="1.1" fill="none" stroke-linejoin="round"/></g>
<g><path d="M18 488.25H34.4V505.65H18Z M34.4 488.25L39 483.65V501.05L34.4 505.65Z M18 488.25L22.6 483.65H39L34.4 488.25Z" fill="#7dd3a8"/><path d="M22 492.75H30.4V501.25H22Z" fill="#282828"/><path d="M18 488.25L22 492.75M34.4 488.25L30.4 492.75M18 505.65L22 501.25M34.4 505.65L30.4 501.25" stroke="#282828" stroke-width="0.8"/><path d="M18 488.25H34.4V505.65H18Z M18 488.25L22.6 483.65H39.0V501.04999999999995L34.4 505.65 M34.4 488.25L39.0 483.65" stroke="#ececec" stroke-width="1.1" fill="none" stroke-linejoin="round"/></g>
<path d="M17.9 525.5833333333334H32.5V530.1833333333334H17.9Z M32.5 525.5833333333334L36.2 521.4833333333333L38.1 524.6833333333334L32.5 530.1833333333334Z" fill="#7dd3a8"/>
<path d="M17.9 525.5833333333334V540.2833333333334H32.5L38.1 534.6833333333334V524.6833333333334L34.4 520.9833333333333H22.5L17.9 525.5833333333334H32.5L36.2 521.4833333333333 M32.5 530.1833333333334V540.2833333333334M32.5 530.1833333333334L38.1 524.6833333333334" stroke="#ececec" stroke-width="1.1" fill="none" stroke-linejoin="round"/>
<path d="M18 560.9166666666666H32.5V575.4166666666666H18Z M18 560.9166666666666L22.5 556.4166666666666H38V570.4166666666666L32.5 575.4166666666666 M32.5 560.9166666666666L38 556.4166666666666 M22.5 556.4166666666666" stroke="#ececec" stroke-width="1.1" fill="none"/><path d="M25.3 562.9166666666666V575.4166666666666" stroke="#7dd3a8" stroke-width="1.5"/><path d="M28.2 575.4166666666666V560.9166666666666L32.6 556.4166666666666" stroke="#ececec" stroke-width="1" fill="none"/>
<path d="M18 595.75H32.5V610.25H18Z M18 595.75L22.5 591.25H38V605.25L32.5 610.25 M32.5 595.75L38 591.25" stroke="#ececec" stroke-width="1.1" fill="none"/><path d="M30 591.45L23.4 596.25L29.8 610.75" stroke="#7dd3a8" stroke-width="1" fill="none"/><circle cx="30" cy="591.45" r="1.6" fill="#7dd3a8"/><circle cx="23.4" cy="596.25" r="1.5" fill="#7dd3a8"/><circle cx="29.8" cy="610.75" r="1.5" fill="#7dd3a8"/>
<path d="M19.7 635.5833333333334L26.1 625.6833333333334L36.2 629.7833333333334L37.1 644.9833333333333H19.7Z" fill="#7dd3a8"/><circle cx="26.1" cy="625.6833333333334" r="1.7" fill="#f4f4f4"/><circle cx="36.2" cy="629.7833333333334" r="1.7" fill="#f4f4f4"/><circle cx="37.1" cy="644.9833333333333" r="1.7" fill="#f4f4f4"/><circle cx="19.7" cy="644.9833333333333" r="1.7" fill="#f4f4f4"/><circle cx="19.7" cy="635.5833333333334" r="1.7" fill="#f4f4f4"/>
<path d="M27 672.0166666666668L28.5 661.1166666666668A11 11 0 1 0 36.5 666.4166666666667Z" fill="#7dd3a8"/><path d="M27 672.0166666666668L16 672.0166666666668M27 672.0166666666668L20 680.4166666666667M27 672.0166666666668L27 683.0166666666668M27 672.0166666666668L35 679.4166666666667M27 672.0166666666668L21 662.9166666666667" stroke="#282828" stroke-width="0.9"/><path d="M29 661.4166666666667L30 670.9166666666667L35.5 665.9166666666667M30 660.8166666666667A11 11 0 0 1 37.5 674.4166666666667" stroke="#ececec" stroke-width="0.9" fill="none"/>
<path d="M18.5 704.25C18.5 698.25 21 696.75 27.6 696.75C34 696.75 36.6 698.25 36.6 704.25C36.6 711.25 34 715.75 27.6 715.75C21 715.75 18.5 711.25 18.5 704.25Z" fill="#d6d6d6"/><path d="M18.5 705.25C23 705.75 32 705.75 36.6 704.75M27.6 696.75C27 702.25 27 710.25 27.6 715.75" stroke="#444" stroke-width="0.9" fill="none"/>
<path d="M21.5 750.0833333333334V736.5833333333334L26 732.0833333333334M18.5 750.0833333333334V737.0833333333334L23 732.5833333333334" stroke="#ececec" stroke-width="1" fill="none"/><path d="M25 737.0833333333334H33V750.0833333333334H25Z M25 737.0833333333334L29.5 732.5833333333334H38V745.5833333333334L33 750.0833333333334 M33 737.0833333333334L38 732.5833333333334" stroke="#ececec" stroke-width="1.1" fill="none"/><path d="M14.5 728.5833333333334L18.5 726.0833333333334V731.0833333333334Z" fill="#ececec"/><path d="M17.5 728.5833333333334H21" stroke="#ececec" stroke-width="1"/>
<g transform="translate(27.6,775.9166666666667)"><rect x="-5.5" y="-5.5" width="11" height="11" fill="#555" stroke="#e0e0e0" stroke-width="1.1"/><path d="M-4 -4L4 4M4 -4L-4 4" stroke="#fff" stroke-width="1.6"/><path d="M-4.5 -1.5V-4.5H-1.5M1.5 -4.5H4.5V-1.5M4.5 1.5V4.5H1.5M-1.5 4.5H-4.5V1.5" stroke="#fff" stroke-width="1" fill="none"/><path d="M0 -11L-3 -7.5H3Z M0 11L-3 7.5H3Z M-11 0L-7.5 -3V3Z M11 0L7.5 -3V3Z" fill="#eee"/></g>
<path d="M14.6 805.25L27.6 801.25L39.5 814.25L26.5 818.25Z" fill="#d6d6d6"/><path d="M26.5 818.25L39.5 814.25L41.5 817.25L32 820.35Z" fill="#bdbdbd"/><path d="M27.6 801.25L39.5 814.25" stroke="#444" stroke-width="0.8"/><path d="M35.5 798.75L39.5 796.25V801.25Z" fill="#ececec"/><path d="M38.5 798.75H42" stroke="#ececec" stroke-width="1"/>
<path d="M14.6 846.7833333333334L20 854.0833333333334H34.5L39.5 849.0833333333334V836.5833333333334H26L20.5 841.0833333333334V844.0833333333334Z M20.5 844.0833333333334L39.5 840.5833333333334 M34.5 854.0833333333334V842.0833333333334L39.5 836.5833333333334" stroke="#ececec" stroke-width="1" fill="none" stroke-linejoin="round"/><circle cx="14.6" cy="846.7833333333334" r="1.8" fill="#f4f4f4"/>
<g font-size="11.5" fill="#000" stroke="#000" stroke-width="2.2" stroke-linejoin="round" opacity="0.55"><text x="65" y="120.8">User Perspective</text><text x="65" y="139">(59) Cube</text></g>
<g font-size="11.5" fill="#ffffff" stroke="#ffffff" stroke-width="0.35"><text x="65" y="120.8">User Perspective</text><text x="65" y="139">(59) Cube</text></g>
<path d="M1534.8 151.1L1534.5 127.1" stroke="#2f7ae5" stroke-width="2.2"/>
<path d="M1534.8 151.1L1556.9 135.1" stroke="#6a9a2a" stroke-width="2.2"/>
<path d="M1534.8 151.1L1558.7 165.2" stroke="#e5404f" stroke-width="2.2"/>
<circle cx="1511.5" cy="136.6" r="7" fill="#4a3a3c" stroke="#b8434f" stroke-width="1.2"/>
<circle cx="1513.3" cy="166.4" r="7.3" fill="#4d5e3b" stroke="#6a9a2a" stroke-width="1.3"/>
<circle cx="1535" cy="174.7" r="6.8" fill="#3b4350" stroke="#2f7ae5" stroke-width="1.2"/>
<circle cx="1534.5" cy="127.1" r="7.8" fill="#2f7ae5"/><circle cx="1556.9" cy="135.1" r="7.8" fill="#6a9a2a"/><circle cx="1558.7" cy="165.2" r="7.8" fill="#e5404f"/>
<g font-size="10" font-weight="bold" fill="#111" text-anchor="middle"><text x="1534.5" y="130.8">Z</text><text x="1556.9" y="138.8">Y</text><text x="1558.7" y="168.9">X</text></g>
<circle cx="1563" cy="206" r="13.5" fill="#262626" fill-opacity="0.75"/>
<circle cx="1563" cy="235.8" r="13.5" fill="#262626" fill-opacity="0.75"/>
<circle cx="1563" cy="265.7" r="13.5" fill="#262626" fill-opacity="0.75"/>
<circle cx="1563" cy="295.8" r="13.5" fill="#262626" fill-opacity="0.75"/>
<g transform="translate(1563,206)"><circle cx="1.5" cy="-1.5" r="5" fill="none" stroke="#eee" stroke-width="1.3"/><path d="M-2 2L-7 7" stroke="#eee" stroke-width="2"/><path d="M1.5 -4V1M-1 -1.5H4" stroke="#eee" stroke-width="1.1"/></g>
<g transform="translate(1563,235.8)"><path d="M-5 1V-4A1 1 0 0 1 -3 -4V0V-6A1 1 0 0 1 -1 -6V0V-7A1 1 0 0 1 1 -7V0V-6A1 1 0 0 1 3 -6V1L4.5 -1.5A1 1 0 0 1 6.5 -0.5L3 6H-3Z" fill="#eee"/></g>
<g transform="translate(1563,265.7)" stroke="#eee" stroke-width="1.1" fill="none"><circle cx="-3" cy="-3.5" r="2.5"/><circle cx="3" cy="-3.5" r="2.5"/><rect x="-4" y="1" width="7" height="5"/><path d="M3 3.5L6.5 1.5V6Z"/></g>
<g transform="translate(1563,295.8)" stroke="#eee" stroke-width="1.1" fill="none"><path d="M-4 -6H4L7 6H-7Z M-5.5 0H5.5M-1.3 -6L-2.3 6M1.3 -6L2.3 6M-4.7 -3H4.7M-6 3H6"/></g>
<path d="M1585 114V131A4 4 0 0 1 1577 127V118A4 4 0 0 1 1585 114Z" fill="#303030" fill-opacity="0.6"/>
<path d="M1582.5 119L1579.5 122.5L1582.5 126" fill="none" stroke="#bbb" stroke-width="1.1"/>
<clipPath id="olc"><rect x="1588" y="50" width="331.5" height="168.5" rx="7"/></clipPath><g clip-path="url(#olc)">
<rect x="1588" y="50" width="332" height="169" fill="#282828"/>
<rect x="1588" y="97" width="332" height="20" fill="#2b2b2b"/>
<rect x="1588" y="137" width="332" height="20" fill="#2b2b2b"/>
<rect x="1588" y="177" width="332" height="20" fill="#2b2b2b"/>
<rect x="1588" y="217" width="332" height="20" fill="#2b2b2b"/>
<rect x="1596.3" y="52.8" width="31.2" height="18.9" fill="#232323" rx="4" stroke="#303030" stroke-width="0.8"/>
<path d="M1601 56.5H1605V58.5H1601Z" fill="#e0e0e0"/>
<path d="M1602 58.5V66H1605M1602 62H1605" fill="none" stroke="#e0e0e0" stroke-width="1"/>
<rect x="1605" y="60.5" width="7" height="3" fill="#e0e0e0"/>
<rect x="1605" y="64.5" width="7" height="3" fill="#e0e0e0"/>
<path d="M1618 61.5L1621 64.5L1624 61.5" fill="none" stroke="#cfcfcf" stroke-width="1.2"/>
<rect x="1633" y="52.8" width="31.6" height="18.9" fill="#232323" rx="4" stroke="#303030" stroke-width="0.8"/>
<path d="M1637.5 59.5V68.5H1646.5 M1639.5 57.5V66.5H1648.5 M1641.5 55.5H1650.5V64.5H1641.5Z" fill="none" stroke="#d8d8d8" stroke-width="1.1"/>
<path d="M1642.5 63.5L1645.5 59.5L1647.5 61.5L1649.5 58.5V63.5Z" fill="#d8d8d8"/>
<path d="M1655 61.5L1658 64.5L1661 61.5" fill="none" stroke="#cfcfcf" stroke-width="1.2"/>
<rect x="1683.6" y="52.8" width="117.8" height="18.9" fill="#1d1d1d" rx="4" stroke="#303030" stroke-width="0.8"/>
<circle cx="1696" cy="59.8" r="3.8" fill="none" stroke="#cfcfcf" stroke-width="1.1"/>
<path d="M1693.3 62.5L1688.5 67.3" fill="none" stroke="#cfcfcf" stroke-width="1.2"/>
<text x="1709" y="67" font-size="12" fill="#6d6d6d">Search</text>
<rect x="1855.4" y="52.8" width="31" height="18.9" fill="#232323" rx="4" stroke="#303030" stroke-width="0.8"/>
<path d="M1859 56.5H1869L1865.5 61V68L1862.5 66V61Z" fill="none" stroke="#e0e0e0" stroke-width="1.1"/>
<path d="M1877 61.5L1880 64.5L1883 61.5" fill="none" stroke="#cfcfcf" stroke-width="1.2"/>
<rect x="1892.6" y="52.8" width="18.5" height="18.9" fill="#3d3d3d" rx="4"/>
<path d="M1895.5 59V68H1906V63M1895.5 59H1901" fill="none" stroke="#cfcfcf" stroke-width="1.1"/>
<rect x="1895" y="57" width="6" height="3" fill="#cfcfcf"/>
<circle cx="1906" cy="58" r="3.6" fill="#3d3d3d" stroke="#eee" stroke-width="1"/>
<path d="M1906 56V60M1904 58H1908" fill="none" stroke="#eee" stroke-width="1"/>
<rect x="1610.6" y="80" width="14" height="3" fill="#e0e0e0"/>
<rect x="1611.6" y="84" width="12" height="9" fill="#e0e0e0"/>
<rect x="1615.6" y="86" width="4" height="1.5" fill="#282828"/>
<text x="1632.2" y="91.3" font-size="12" fill="#cccccc">Scene Collection</text>
<path d="M1615.0 104.75L1618.5 108.25L1622.0 104.75" fill="none" stroke="#bdbdbd" stroke-width="1.2"/>
<rect x="1628.3" y="97.5" width="19.5" height="18" fill="#464646" rx="4.5" stroke="#505050" stroke-width="0.8"/>
<rect x="1631" y="99.5" width="14" height="3" fill="#e0e0e0"/>
<rect x="1632" y="103.5" width="12" height="9" fill="#e0e0e0"/>
<rect x="1636" y="105.5" width="4" height="1.5" fill="#282828"/>
<text x="1652" y="111" font-size="12" fill="#e6e6e6">Collection</text>
<path d="M1617.6 120.5V171" fill="none" stroke="#4a4a4a" stroke-width="1"/>
<rect x="1855" y="101.5" width="10.5" height="10.5" rx="1.5" fill="#e6e6e6"/>
<path d="M1857.3 106.8L1859.5 109L1863.5 104" fill="none" stroke="#222" stroke-width="1.4"/>
<path d="M1874.0 106.3C1876.5 101.8 1884.5 101.8 1887.0 106.3C1884.5 110.8 1876.5 110.8 1874.0 106.3Z" fill="none" stroke="#e6e6e6" stroke-width="1.2"/><circle cx="1880.5" cy="106.3" r="2" fill="#e6e6e6"/>
<rect x="1894.5" y="102.3" width="12" height="9" rx="1.5" fill="#e6e6e6"/><rect x="1897.5" y="100.3" width="6" height="3" fill="#e6e6e6"/><circle cx="1900.5" cy="106.8" r="3" fill="#282828"/><circle cx="1900.5" cy="106.8" r="1.6" fill="#e6e6e6"/>
<path d="M1874.0 126.3C1876.5 121.8 1884.5 121.8 1887.0 126.3C1884.5 130.8 1876.5 130.8 1874.0 126.3Z" fill="none" stroke="#e6e6e6" stroke-width="1.2"/><circle cx="1880.5" cy="126.3" r="2" fill="#e6e6e6"/>
<rect x="1894.5" y="122.3" width="12" height="9" rx="1.5" fill="#e6e6e6"/><rect x="1897.5" y="120.3" width="6" height="3" fill="#e6e6e6"/><circle cx="1900.5" cy="126.8" r="3" fill="#282828"/><circle cx="1900.5" cy="126.8" r="1.6" fill="#e6e6e6"/>
<path d="M1874.0 146.3C1876.5 141.8 1884.5 141.8 1887.0 146.3C1884.5 150.8 1876.5 150.8 1874.0 146.3Z" fill="none" stroke="#e6e6e6" stroke-width="1.2"/><circle cx="1880.5" cy="146.3" r="2" fill="#e6e6e6"/>
<rect x="1894.5" y="142.3" width="12" height="9" rx="1.5" fill="#e6e6e6"/><rect x="1897.5" y="140.3" width="6" height="3" fill="#e6e6e6"/><circle cx="1900.5" cy="146.8" r="3" fill="#282828"/><circle cx="1900.5" cy="146.8" r="1.6" fill="#e6e6e6"/>
<path d="M1874.0 166.3C1876.5 161.8 1884.5 161.8 1887.0 166.3C1884.5 170.8 1876.5 170.8 1874.0 166.3Z" fill="none" stroke="#e6e6e6" stroke-width="1.2"/><circle cx="1880.5" cy="166.3" r="2" fill="#e6e6e6"/>
<rect x="1894.5" y="162.3" width="12" height="9" rx="1.5" fill="#e6e6e6"/><rect x="1897.5" y="160.3" width="6" height="3" fill="#e6e6e6"/><circle cx="1900.5" cy="166.8" r="3" fill="#282828"/><circle cx="1900.5" cy="166.8" r="1.6" fill="#e6e6e6"/>
<path d="M1637.45 123.4L1640.95 126.9L1637.45 130.4" fill="none" stroke="#bdbdbd" stroke-width="1.2"/>
<path d="M1637.45 143.4L1640.95 146.9L1637.45 150.4" fill="none" stroke="#bdbdbd" stroke-width="1.2"/>
<path d="M1637.45 163.4L1640.95 166.9L1637.45 170.4" fill="none" stroke="#bdbdbd" stroke-width="1.2"/>
<g fill="#e88e2e"><circle cx="1654.5" cy="121.5" r="3"/><circle cx="1661" cy="121.5" r="3"/><rect x="1651" y="124.5" width="10" height="6"/><path d="M1661 127L1665 124.5V130.5Z"/></g>
<rect x="1652.5" y="126" width="3" height="2" fill="#282828"/>
<text x="1672" y="131" font-size="12" fill="#e6e6e6">Camera</text>
<rect x="1732.3" y="117.3" width="19.5" height="18.5" fill="#464646" rx="4.5" stroke="#505050" stroke-width="0.8"/>
<g stroke="#3fbf9a" stroke-width="1.1" fill="none"><circle cx="1738.5" cy="122.5" r="2.3"/><path d="M1736 122.5A5 5 0 0 1 1746 121.5V124H1740"/><rect x="1737" y="126.5" width="8" height="5"/><path d="M1745 128.5L1748 126.5V131.5Z"/></g>
<rect x="1648.3" y="137.3" width="19.5" height="18.5" fill="#464646" rx="4.5" stroke="#505050" stroke-width="0.8"/>
<path d="M1652 140.5H1664L1658 153.5Z" fill="#e88e2e"/>
<path d="M1655 142.8H1661L1658 149.5Z" fill="#464646"/>
<text x="1672" y="151" font-size="12" fill="#f0a050">Cube</text>
<rect x="1720.3" y="137.3" width="19.5" height="18.5" fill="#24453e" rx="4.5" stroke="#2f5a50" stroke-width="0.8"/>
<g stroke="#3fd6a8" stroke-width="1.2" fill="none"><path d="M1724.5 141.5H1735.5L1730 151.5Z"/></g><g fill="#2a4a44" stroke="#3fd6a8" stroke-width="1"><rect x="1723" y="140" width="3" height="3"/><rect x="1734" y="140" width="3" height="3"/><rect x="1728.5" y="150" width="3" height="3"/></g>
<g fill="#e88e2e"><circle cx="1658" cy="163.5" r="5"/><rect x="1655" y="168" width="6" height="1.6"/><rect x="1656" y="170.5" width="4" height="1.4"/></g>
<rect x="1655.5" y="162" width="1.5" height="2" fill="#282828"/><rect x="1659" y="162" width="1.5" height="2" fill="#282828"/>
<text x="1672" y="171" font-size="12" fill="#e6e6e6">Light</text>
<circle cx="1729.5" cy="165" r="5.3" fill="none" stroke="#2fc4b0" stroke-width="1.1" stroke-dasharray="2.2 1.2"/><path d="M1729.5 165V173" stroke="#3fd6a8" stroke-width="1.1" stroke-dasharray="1.5 1"/><circle cx="1729.5" cy="165" r="1" fill="#3fd6a8"/>
<path d="M1593 141.5H1601M1593 141.5V151.5M1593 151.5H1603M1603 151.5V144" fill="none" stroke="#d0d0d0" stroke-width="1"/>
<rect x="1591.5" y="140" width="3" height="3" fill="#282828" stroke="#d0d0d0" stroke-width="0.9"/><rect x="1591.5" y="150" width="3" height="3" fill="#282828" stroke="#d0d0d0" stroke-width="0.9"/><rect x="1601.5" y="150" width="3" height="3" fill="#282828" stroke="#d0d0d0" stroke-width="0.9"/><rect x="1600.5" y="139" width="4.5" height="4.5" fill="#f0f0f0"/>
</g>
<clipPath id="prc"><rect x="1588" y="222" width="331.5" height="795" rx="7"/></clipPath><g clip-path="url(#prc)">
<rect x="1588" y="222" width="332" height="795" fill="#303030"/>
<rect x="1588" y="247" width="28" height="770" fill="#1d1d1d"/>
<rect x="1588" y="247" width="28" height="36" fill="#1b1b1b"/>
<rect x="1596.6" y="224.3" width="31" height="19.2" fill="#282828" rx="4" stroke="#333" stroke-width="0.8"/>
<rect x="1601.5" y="227.5" width="13" height="6" rx="3" fill="#e0e0e0"/><rect x="1607.5" y="229" width="5.5" height="3" rx="1.5" fill="#282828"/><rect x="1601.5" y="235" width="13" height="6" rx="3" fill="#e0e0e0"/><rect x="1608.5" y="236.5" width="4.5" height="3" rx="1.5" fill="#282828"/>
<path d="M1618.5 233.0L1621.5 236.0L1624.5 233.0" fill="none" stroke="#cfcfcf" stroke-width="1.2"/>
<rect x="1696" y="225" width="117" height="18.5" fill="#1d1d1d" rx="4" stroke="#2a2a2a" stroke-width="0.8"/>
<circle cx="1707.5" cy="231.8" r="3.8" fill="none" stroke="#cfcfcf" stroke-width="1.1"/>
<path d="M1704.8 234.5L1700.5 238.8" fill="none" stroke="#cfcfcf" stroke-width="1.2"/>
<text x="1720" y="238.7" font-size="12" fill="#6d6d6d">Search</text>
<rect x="1893" y="225" width="18.5" height="18.5" fill="#1d1d1d" rx="4" stroke="#2a2a2a" stroke-width="0.8"/>
<path d="M1899.2 233.0L1902.2 236.0L1905.2 233.0" fill="none" stroke="#cfcfcf" stroke-width="1.2"/>
<g transform="translate(1603,268.5)"><path d="M-4.3 -7V-1" stroke="#bbb" stroke-width="1.2"/><circle cx="-4.3" cy="3.5" r="2.7" fill="#bbb"/><path d="M3.8 -1V6.5" stroke="#bbb" stroke-width="2.4" stroke-linecap="round"/><path d="M1 -7V-4A2.8 2.8 0 0 0 6.6 -4V-7" stroke="#bbb" stroke-width="1.8" fill="none"/></g>
<rect x="1592" y="283" width="24" height="1" fill="#262626"/>
<g transform="translate(1603,304)"><rect x="-6.5" y="-3.5" width="13" height="9" fill="none" stroke="#bbb" stroke-width="1.3"/><rect x="-3" y="-6" width="5" height="2.5" fill="#bbb"/><path d="M-4.5 -0.5H2.5M-4.5 1.5H2.5M-4.5 3.5H2.5" stroke="#bbb" stroke-width="0.9"/><rect x="4" y="-1" width="1.6" height="1.6" fill="#bbb"/><rect x="4" y="2.5" width="1.6" height="1.6" fill="#bbb"/></g>
<g transform="translate(1603,332.5)"><rect x="-7" y="-7" width="14" height="5" rx="1" fill="#bbb"/><rect x="-4.5" y="-3" width="9" height="9.5" fill="#bbb"/><path d="M-3 5L0 1L3 5Z" fill="#1d1d1d"/><rect x="-3.2" y="-2.5" width="6.4" height="8" fill="none" stroke="#1d1d1d" stroke-width="0.6"/></g>
<g transform="translate(1603,360.4)" fill="none" stroke="#bbb" stroke-width="1.1"><path d="M-6.5 -3V7H3.5M-4.5 -5V5H5.5M-2.5 -7H7.5V3H-2.5Z"/><path d="M-1.5 2L1.5 -2L3.5 0L5.5 -4V2Z" fill="#bbb" stroke="none"/></g>
<g transform="translate(1603,388)"><path d="M-3.5 -6.5L-7 1.5A3.3 3.3 0 0 0 -0.5 3.3Z" fill="#bbb"/><circle cx="4" cy="-4.8" r="1.8" fill="#bbb"/><circle cx="3" cy="3.2" r="3.5" fill="#1d1d1d" stroke="#bbb" stroke-width="1.2"/></g>
<g transform="translate(1603,416.5)"><circle r="6" fill="none" stroke="#c0614a" stroke-width="1.4"/><path d="M-3.5 -3C-1 -4 1 -2.5 0 -0.5C-1 1.5 1 2.5 2 4L-1 5C-3 3 -4 1 -3.5 -3Z M2 -5C4 -4 5 -2 4.5 0L2.5 -1.5Z" fill="#c0614a"/><path d="M-7 7L7 -7" stroke="#c0614a" stroke-width="1.1"/></g>
<rect x="1592" y="431.5" width="24" height="1" fill="#262626"/>
<g transform="translate(1603,452.3)"><rect x="-6.5" y="-6.5" width="13" height="3" fill="#e8e8e8"/><path d="M-5 -2.5H5V6.5H-5Z" fill="none" stroke="#e8e8e8" stroke-width="1.3"/><rect x="-2" y="0" width="4" height="1.5" fill="#e8e8e8"/></g>
<rect x="1592" y="467" width="24" height="1" fill="#262626"/>
<g transform="translate(1603,488.8)"><path d="M-7 -4V-7H-4M4 -7H7V-4M7 4V7H4M-4 7H-7V4" stroke="#c06040" stroke-width="1.1" fill="none"/><rect x="-4" y="-4" width="8" height="8" fill="#e8922e"/></g>
<rect x="1590" y="504" width="26" height="26" fill="#303030" rx="4"/>
<g transform="translate(1603,516.6)"><path d="M-6 6L1 -1" stroke="#8a9cf0" stroke-width="2.6"/><path d="M-1 -2A4.5 4.5 0 0 1 4.5 -7L2.5 -4.5L4.5 -2.5L7 -4.5A4.5 4.5 0 0 1 2 1Z" fill="#8a9cf0"/></g>
<g transform="translate(1603,544.5)" fill="#5a8ad8"><circle cx="-5" cy="-4" r="2.2"/><circle cx="5" cy="-4" r="1.5"/><circle cx="5" cy="5" r="1.5"/><circle cx="-5" cy="5" r="1.2"/><path d="M-5 -4H5M-5 -4L5 5M-5 -4V5" stroke="#5a8ad8" stroke-width="1"/></g>
<g transform="translate(1603,572.8)"><circle r="5.8" fill="none" stroke="#5a8ad8" stroke-width="1.1" stroke-dasharray="18 5"/><circle r="2.6" fill="#5a8ad8"/><circle cx="4.5" cy="-4.5" r="1.6" fill="#5a8ad8"/></g>
<g transform="translate(1603,600.7)"><path d="M-6 3A5 5 0 0 1 3 -5L6 -6L5 -3A5 5 0 0 1 -3 6A3.5 3.5 0 0 1 -6 3Z" fill="none" stroke="#5a8ad8" stroke-width="1.3"/><circle cx="-1" cy="1" r="2.2" fill="none" stroke="#5a8ad8" stroke-width="1.2"/></g>
<g transform="translate(1603,628.2)"><path d="M-6 -5H6L0 6Z" fill="none" stroke="#3fd6a8" stroke-width="1.2"/><g fill="#1f1f1f" stroke="#3fd6a8" stroke-width="1"><rect x="-7.5" y="-6.5" width="3" height="3"/><rect x="4.5" y="-6.5" width="3" height="3"/><rect x="-1.5" y="4.5" width="3" height="3"/></g></g>
<g transform="translate(1603,656)"><circle r="6.5" fill="#c0614a"/><path d="M0 -6.5V0H6.5A6.5 6.5 0 0 0 0 -6.5Z M0 0V6.5A6.5 6.5 0 0 1 -6.5 0Z" fill="#1f1f1f"/></g>
<rect x="1592" y="672" width="24" height="1" fill="#262626"/>
<g transform="translate(1634,265)"><path d="M-7 -4V-7H-4M4 -7H7V-4M7 4V7H4M-4 7H-7V4" stroke="#cfcfcf" stroke-width="1.1" fill="none"/><rect x="-4" y="-4" width="8" height="8" fill="#f0f0f0"/></g>
<text x="1650.4" y="268.6" font-size="12" fill="#e6e6e6">Cube</text>
<g transform="translate(1904,265) rotate(45)" stroke="#9a9a9a" stroke-width="1.1" fill="none"><path d="M-1.8 -7V-1.5M1.8 -7V-1.5M-3 -7.5H3M-4 -1H4M0 -1V8"/></g>
<rect x="1625" y="292" width="286" height="18.5" fill="#545454" rx="4"/>
<path d="M1632 301.2H1641M1636.5 296.7V305.7" fill="none" stroke="#eee" stroke-width="1.2"/>
<text x="1776.5" y="305.5" font-size="12" fill="#eeeeee" text-anchor="middle">Add Modifier</text>
</g>
<rect x="1588.5" y="50.5" width="330.5" height="168" rx="7" fill="none" stroke="#383838" stroke-width="1"/>
<rect x="1588.5" y="222.5" width="330.5" height="794" rx="7" fill="none" stroke="#3c3c3c" stroke-width="1"/>
<rect x="0" y="1017" width="1920" height="23" fill="#181818"/>
<rect x="10.5" y="1021.5" width="11" height="14" rx="4" fill="none" stroke="#bdbdbd" stroke-width="1"/>
<path d="M12.0 1027.5V1025.5A3 3 0 0 1 15.5 1022.3V1027.5Z" fill="#bdbdbd"/>
<text x="26.3" y="1033.3" font-size="11.5" fill="#bdbdbd">Circle Select</text>
<rect x="101.5" y="1021.5" width="11" height="14" rx="4" fill="none" stroke="#bdbdbd" stroke-width="1"/>
<rect x="105.5" y="1023.5" width="3" height="5" rx="1.5" fill="#bdbdbd"/>
<text x="117.5" y="1033.3" font-size="11.5" fill="#bdbdbd">Rotate View</text>
<rect x="190.5" y="1021.5" width="11" height="14" rx="4" fill="none" stroke="#bdbdbd" stroke-width="1"/>
<path d="M200.0 1027.5V1025.5A3 3 0 0 0 196.5 1022.3V1027.5Z" fill="#bdbdbd"/>
<text x="206" y="1033.3" font-size="11.5" fill="#bdbdbd">Options</text>
<g transform="translate(1862.5,1028)" stroke="#8a8a8a" stroke-width="1" fill="none"><circle r="6"/><ellipse rx="2.5" ry="6"/><path d="M-6 0H6M-5 -3H5M-5 3H5M-7 -6L7 7"/></g>
<rect x="1877" y="1022" width="1" height="13" fill="#8a8a8a"/>
<text x="1882.5" y="1033.3" font-size="12" fill="#8a8a8a">4.4.3</text>
<rect x="0" y="1040" width="1920" height="23" fill="#1c1b1a"/>
<rect x="590" y="1040" width="47.5" height="23" fill="#434343"/>
<g fill="#f2f2f2"><path d="M16 1053L23 1052V1058.5H16Z"/><path d="M24 1051.8L32.5 1050.6V1058.5H24Z"/><path d="M16 1059.5H23V1063H16Z"/><path d="M24 1059.5H32.5V1063H24Z"/></g>
<circle cx="75" cy="1059.5" r="11.8" fill="#3a76e0"/><circle cx="75" cy="1061" r="6" fill="#e8e8f0"/><circle cx="82" cy="1063" r="5" fill="#d8262b"/>
<path d="M113 1052.5H120L122 1054H134V1063H113Z" fill="#f3c04a"/><rect x="113" y="1056" width="21" height="7" fill="#f7d063"/><rect x="117" y="1060" width="13" height="3" fill="#2d6fd3"/>
<circle cx="173" cy="1059.5" r="12" fill="#1a8fd6"/><path d="M173 1047.5A12 12 0 0 1 185 1059.5L176 1063Z" fill="#4cc38a"/><circle cx="171" cy="1062" r="4.5" fill="#1d1c1a"/><path d="M166 1063A7 7 0 0 1 178 1056" stroke="#0f5fb5" stroke-width="3" fill="none"/>
<circle cx="222" cy="1059.5" r="12" fill="#e34133"/><path d="M222 1059.5L234 1059.5A12 12 0 0 1 222 1071.5Z" fill="#f5c02e"/><path d="M222 1059.5L222 1071.5A12 12 0 0 1 211 1054Z" fill="#3aa757"/><circle cx="222" cy="1059.5" r="5.6" fill="#fff"/><circle cx="222" cy="1059.5" r="4.3" fill="#3478e5"/>
<circle cx="319.5" cy="1059.5" r="12" fill="#e34133"/><path d="M319.5 1059.5L331.5 1059.5A12 12 0 0 1 319.5 1071.5Z" fill="#f5c02e"/><path d="M319.5 1059.5L319.5 1071.5A12 12 0 0 1 308.5 1054Z" fill="#3aa757"/><circle cx="319.5" cy="1059.5" r="5.6" fill="#fff"/><circle cx="319.5" cy="1059.5" r="4.3" fill="#3478e5"/>
<circle cx="326" cy="1063" r="3" fill="#222" stroke="#ddd" stroke-width="1"/>
<circle cx="271" cy="1061" r="10.5" fill="#f0722a"/><path d="M262 1054C265 1047 275 1046 279 1050C276 1049 272 1050 271 1053Z" fill="#ffb43b"/><circle cx="271.5" cy="1062" r="6" fill="#5a3fd0"/><path d="M263 1056C266 1052 271 1053 272 1056" fill="#ff9a3a"/>
<path d="M377 1049L381 1051V1063H376V1056L366 1063L359 1058L366 1051.5L376.5 1049Z" fill="#2f9de8"/><path d="M358 1057L361 1055.5L376 1063H370Z" fill="#1f6fc0"/>
<circle cx="418" cy="1060" r="11.5" fill="#1b2f56"/><path d="M406.5 1060L417 1063.5L410 1063Z" fill="#e8e8e8"/><circle cx="421.5" cy="1056.2" r="4.6" fill="#e8e8e8"/><circle cx="421.5" cy="1056.2" r="2.6" fill="#1b2f56"/><path d="M406.5 1062L419 1063" stroke="#e8e8e8" stroke-width="3"/>
<circle cx="564.5" cy="1060" r="11.5" fill="#1b2f56"/><path d="M553.0 1060L563.5 1063.5L556.5 1063Z" fill="#e8e8e8"/><circle cx="568.0" cy="1056.2" r="4.6" fill="#e8e8e8"/><circle cx="568.0" cy="1056.2" r="2.6" fill="#1b2f56"/><path d="M553.0 1062L565.5 1063" stroke="#e8e8e8" stroke-width="3"/>
<rect x="455" y="1049" width="24" height="14" fill="#22607e"/><rect x="461" y="1049" width="1.6" height="14" fill="#0b0b0b"/>
<rect x="505.8" y="1049.3" width="20" height="14" rx="2" fill="#00005b"/><text x="515.8" y="1063" font-size="12.5" font-weight="bold" fill="#9999ff" text-anchor="middle">An</text>
<g transform="translate(617.5,1061) scale(1.35)"><g stroke="#e87d0d" stroke-linecap="round" stroke-width="1.9" fill="none"><path d="M-6.8 -3.9H-1.3M-2.1 -6.6L1.4 -3.6M-8.4 1.7L-3.3 -2.3"/></g><circle r="4.7" fill="#e87d0d"/><circle r="3" fill="#f4f4f4"/><circle r="1.9" fill="#2a5a9a"/></g>
<path d="M1701.5 1063L1707 1057.5L1712.5 1063" fill="none" stroke="#e8e8e8" stroke-width="1.1"/>
<path d="M1723 1054.5H1728V1059H1723Z M1725.5 1059V1063 M1729 1055H1738.5V1063" fill="none" stroke="#e8e8e8" stroke-width="1"/>
<path d="M1747.5 1058H1750L1754 1055V1063 M1747.5 1058V1063 M1757 1057A4 4 0 0 1 1757 1063 M1760 1055.5A7 7 0 0 1 1760.5 1063" fill="none" stroke="#e8e8e8" stroke-width="1"/>
<text x="1773" y="1066" font-size="12" fill="#e8e8e8">ENG</text>
<text x="1813.7" y="1054.8" font-size="11.3" fill="#ffffff">2:29 PM</text>
<path d="M1879 1052.5H1893.5V1063H1879Z" fill="#e8e8e8"/><path d="M1881 1055.5H1891M1881 1058H1891M1881 1060.5H1888" stroke="#1c1b1a" stroke-width="1"/>
<rect x="1915" y="1040" width="1" height="23" fill="#5a5a5a"/>
<rect x="1.5" y="50.5" width="1583.5" height="966" rx="7" fill="none" stroke="#5a5a5a" stroke-width="1" opacity="0.7"/>
</svg>
</body></html>
